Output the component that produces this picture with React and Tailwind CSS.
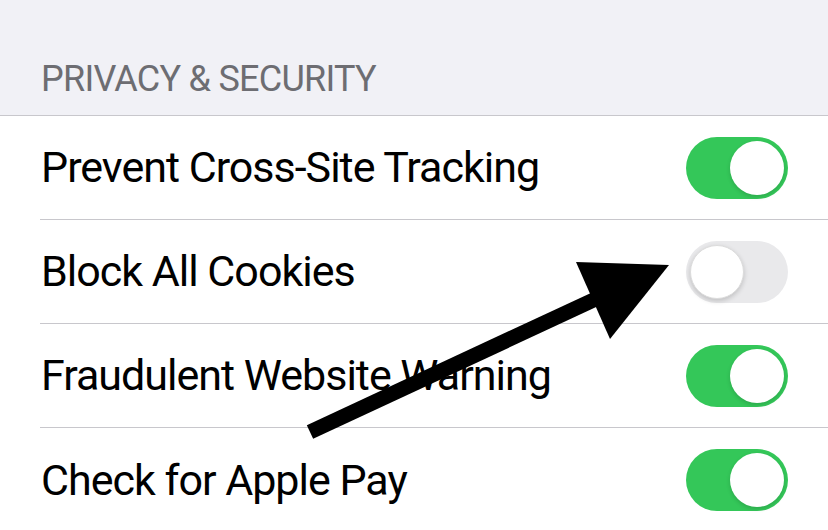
import React from 'react'

const rows = [
  { label: 'Prevent Cross-Site Tracking', on: true },
  { label: 'Block All Cookies', on: false },
  { label: 'Fraudulent Website Warning', on: true },
  { label: 'Check for Apple Pay', on: true },
]

function Toggle({ on }) {
  if (on) {
    return (
      <div className="w-[102px] h-[62px] rounded-full bg-[#34c759] flex items-center justify-end pr-[4px]">
        <div className="w-[54px] h-[54px] rounded-full bg-white shadow-[0_2px_4px_rgba(0,0,0,0.15)]" />
      </div>
    )
  }
  return (
    <div className="w-[102px] h-[62px] rounded-full bg-[#e9e9eb] flex items-center pl-[4px]">
      <div className="w-[54px] h-[54px] rounded-full bg-white shadow-[0_2px_5px_rgba(0,0,0,0.18)] border border-[#dcdcdc]" />
    </div>
  )
}

export default function App() {
  return (
    <div className="relative w-[828px] h-[530px] overflow-hidden bg-white" style={{ fontFamily: 'Roboto, "Liberation Sans", sans-serif' }}>
      <div className="h-[116px] bg-[#f1f1f6] border-b border-[#c8c7cc] pl-[41px] pt-[61px]">
        <div className="text-[36px] leading-none tracking-[-0.75px] text-[#6d6d72]">PRIVACY &amp; SECURITY</div>
      </div>
      {rows.map((r, i) => (
        <div key={i} className="pl-[40px]">
          <div className={'h-[104px] flex items-center justify-between pr-[40px] ' + (i < rows.length - 1 ? 'border-b border-[#c8c7cc]' : '')}>
            <span className="pl-[1px] text-[43px] leading-none tracking-[-1px] text-black">{r.label}</span>
            <Toggle on={r.on} />
          </div>
        </div>
      ))}
      <svg className="absolute inset-0 pointer-events-none" width="828" height="530" viewBox="0 0 828 530">
        <line x1="310" y1="432" x2="600" y2="297" stroke="black" strokeWidth="15" />
        <polygon points="576,262 669,265 610,339" fill="black" />
      </svg>
    </div>
  )
}
